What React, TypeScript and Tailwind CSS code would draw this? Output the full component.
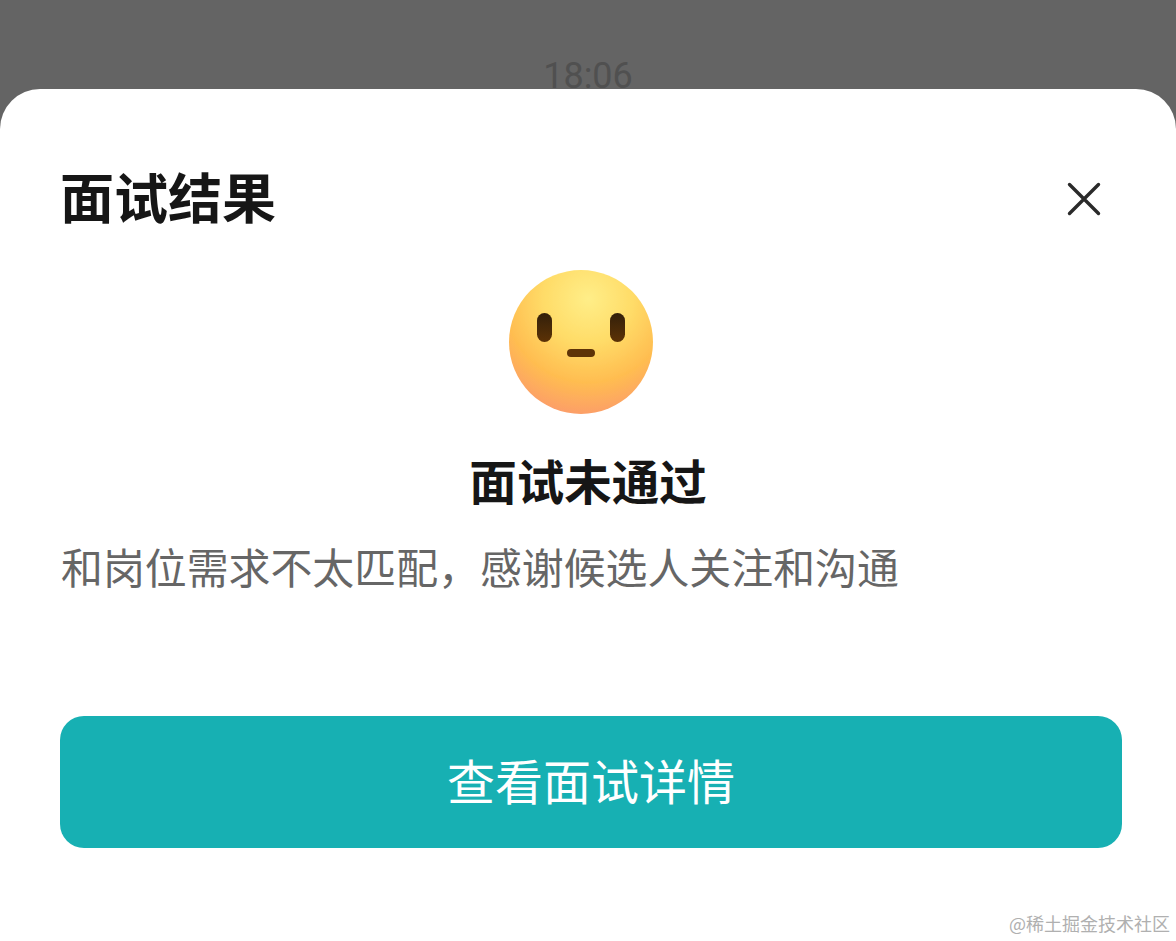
const cjk = "font-['Noto_Sans_CJK_SC','Noto_Sans',sans-serif]";

function FaceEmoji() {
  return (
    <svg width="144" height="144" viewBox="0 0 144 144" className="block">
      <defs>
        <radialGradient id="face" cx="55%" cy="20%" r="88%">
          <stop offset="0%" stopColor="#ffee88" />
          <stop offset="35%" stopColor="#ffdc68" />
          <stop offset="66%" stopColor="#ffbd50" />
          <stop offset="100%" stopColor="#fb9470" />
        </radialGradient>
        <linearGradient id="feature" x1="0" y1="0" x2="0" y2="1">
          <stop offset="0%" stopColor="#33200a" />
          <stop offset="100%" stopColor="#5c3206" />
        </linearGradient>
        <filter id="soft">
          <feGaussianBlur stdDeviation="0.6" />
        </filter>
      </defs>
      <circle cx="72" cy="72" r="72" fill="url(#face)" filter="url(#soft)" />
      <rect x="28" y="43" width="15" height="29" rx="7.5" fill="url(#feature)" />
      <rect x="101" y="43" width="15" height="29" rx="7.5" fill="url(#feature)" />
      <rect x="58" y="79" width="28" height="8" rx="4" fill="#5e3307" />
    </svg>
  );
}

export default function App() {
  return (
    <div className={`relative h-[941px] w-full overflow-hidden bg-[#646464] ${cjk}`}>
      <div className="flex h-[89px] items-end justify-center overflow-hidden">
        <span className="mb-[-6px] font-['Roboto',sans-serif] text-[36px] leading-[38px] text-[#505050]">
          18:06
        </span>
      </div>

      <div className="h-[852px] rounded-t-[40px] bg-white px-[60px]">
        <div className="flex items-center justify-between pt-[74px]">
          <h1 className="text-[54px] font-bold leading-[66px] text-[#161616]">
            面试结果
          </h1>
          <svg width="34" height="34" viewBox="0 0 34 34" className="mr-[15px] mt-[6px]" fill="none">
            <path d="M2.5 2.5 L31.5 31.5 M31.5 2.5 L2.5 31.5" stroke="#2a2a2a" strokeWidth="3.4" strokeLinecap="round" />
          </svg>
        </div>

        <div className="mt-[41px] flex justify-center pr-[14px]">
          <FaceEmoji />
        </div>

        <h2 className="mt-[33px] text-center text-[47.5px] font-bold leading-[66px] text-[#161616]">
          面试未通过
        </h2>

        <p className="ml-[1px] mt-[25px] text-[41.9px] leading-[56px] text-[#666666]">
          和岗位需求不太匹配，感谢候选人关注和沟通
        </p>

        <button className="mt-[122px] flex h-[132px] w-[1062px] items-center justify-center rounded-[24px] bg-[#17b0b3] pb-[6px] text-[48px] text-white">
          查看面试详情
        </button>
      </div>

      <span className="absolute bottom-[4px] right-[6px] text-[18px] leading-[28px] text-[#b0b0b0]">
        @稀土掘金技术社区
      </span>
    </div>
  );
}
